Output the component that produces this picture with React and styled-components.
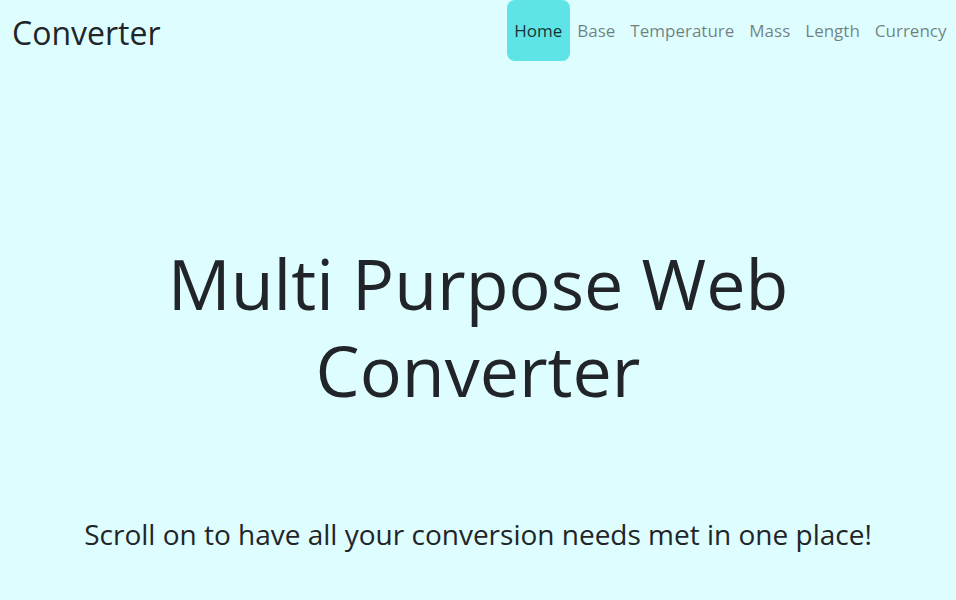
import React from "react";
import styled, { createGlobalStyle } from "styled-components";

const Global = createGlobalStyle`
  html, body {
    margin: 0;
    padding: 0;
    background: #ddfdfe;
  }
  body {
    font-family: "Open Sans", "Noto Sans", sans-serif;
    color: #212529;
  }
`;

const Page = styled.div`
  width: 956px;
  height: 600px;
  overflow: hidden;
  background: #ddfdfe;
`;

const Nav = styled.nav`
  display: flex;
  align-items: center;
  justify-content: space-between;
  height: 62px;
  padding: 0 2px 0 12px;
`;

const Brand = styled.a`
  font-size: 32px;
  color: #212529;
  text-decoration: none;
  line-height: 1;
  margin-top: 3px;
`;

const Links = styled.ul`
  display: flex;
  align-items: stretch;
  height: 62px;
  margin: 0;
  padding: 0;
  list-style: none;
`;

const Link = styled.a`
  display: flex;
  align-items: center;
  height: 61px;
  padding: 0 7.5px;
  font-size: 17px;
  text-decoration: none;
  color: ${(p) => (p.active ? "rgba(0,0,0,0.8)" : "rgba(0,0,0,0.5)")};
  background: ${(p) => (p.active ? "#5ee4e7" : "transparent")};
  border-radius: 8px;
  span {
    margin-top: -1px;
  }
`;

const Hero = styled.section`
  text-align: center;
  padding-top: 178px;
`;

const Title = styled.h1`
  margin: 0 auto;
  width: 760px;
  font-weight: 400;
  font-size: 70px;
  line-height: 87px;
`;

const Lead = styled.p`
  margin: 104px 0 0;
  font-size: 28px;
  line-height: 1.2;
`;

export default function App() {
  const items = ["Home", "Base", "Temperature", "Mass", "Length", "Currency"];
  return (
    <Page>
      <Global />
      <Nav>
        <Brand href="#">Converter</Brand>
        <Links>
          {items.map((t, i) => (
            <li key={t}>
              <Link href="#" active={i === 0 ? 1 : 0}>
                <span>{t}</span>
              </Link>
            </li>
          ))}
        </Links>
      </Nav>
      <Hero>
        <Title>Multi Purpose Web Converter</Title>
        <Lead>Scroll on to have all your conversion needs met in one place!</Lead>
      </Hero>
    </Page>
  );
}
